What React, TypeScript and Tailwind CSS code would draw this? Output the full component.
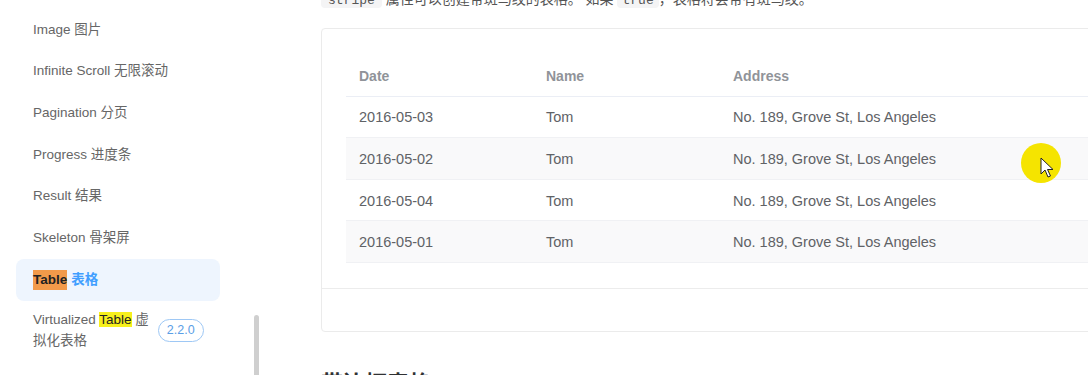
import React from 'react';

const FONT = "font-['Liberation_Sans','Noto_Sans_CJK_SC',sans-serif]";

const navItems = [
  'Image 图片',
  'Infinite Scroll 无限滚动',
  'Pagination 分页',
  'Progress 进度条',
  'Result 结果',
  'Skeleton 骨架屏',
];

const rows = [
  { date: '2016-05-03', name: 'Tom', address: 'No. 189, Grove St, Los Angeles' },
  { date: '2016-05-02', name: 'Tom', address: 'No. 189, Grove St, Los Angeles' },
  { date: '2016-05-04', name: 'Tom', address: 'No. 189, Grove St, Los Angeles' },
  { date: '2016-05-01', name: 'Tom', address: 'No. 189, Grove St, Los Angeles' },
];

const Sidebar = () => (
  <aside className="relative w-[262px] shrink-0 pt-[9px] pl-4">
    {navItems.map((label) => (
      <div key={label} className="h-[41.7px] flex items-center pl-[17px] text-[13.5px] text-[#666]">
        {label}
      </div>
    ))}

    {/* active item */}
    <div className="h-[42px] w-[204px] flex items-center pl-[17px] rounded-lg bg-[#eef5fe] text-[13.5px] font-bold">
      <span className="bg-[#f29a4a] text-[#222]">Table</span>
      <span className="ml-1 text-[#409eff]">表格</span>
    </div>

    <div className="flex items-center pl-[17px] pt-[8px] text-[13.5px] text-[#666] leading-[21px]">
      <span>
        Virtualized <span className="bg-[#f7f01c] text-[#222]">Table</span> 虚
        <br />
        拟化表格
      </span>
      <span className="ml-[9px] rounded-full border border-[#9ec8f5] px-[8px] text-[12.5px] leading-[21px] text-[#5a9ee6]">
        2.2.0
      </span>
    </div>

    {/* scrollbar thumb */}
    <div className="absolute left-[254px] top-[315px] h-[80px] w-[5px] rounded-t-full bg-[#cfcfcf]" />
  </aside>
);

const DemoTable = () => (
  <table className="w-full border-collapse text-left text-[14.5px]">
    <thead>
      <tr className="h-[42px] border-b border-[#ebeef5]">
        <th className="w-[187px] pl-[13px] pt-[4px] text-[14px] font-bold text-[#909399]">Date</th>
        <th className="w-[187px] pl-[13px] pt-[4px] text-[14px] font-bold text-[#909399]">Name</th>
        <th className="pl-[13px] pt-[4px] text-[14px] font-bold text-[#909399]">Address</th>
      </tr>
    </thead>
    <tbody>
      {rows.map((r, i) => (
        <tr
          key={r.date}
          className={`h-[41.6px] border-b border-[#f0f1f4] text-[#606266] ${i % 2 === 1 ? 'bg-[#f9f9fa]' : ''}`}
        >
          <td className="pl-[13px] pt-[3px]">{r.date}</td>
          <td className="pl-[13px] pt-[3px]">{r.name}</td>
          <td className="pl-[13px] pt-[3px]">{r.address}</td>
        </tr>
      ))}
    </tbody>
  </table>
);

export default function App() {
  return (
    <div className={`relative flex h-[375px] w-[1088px] overflow-hidden bg-white ${FONT}`}>
      <Sidebar />

      <main className="w-[826px] shrink-0 pl-[59px]">
        <p className="-mt-[12px] h-[22px] text-[14px] leading-[22px] text-[#555]">
          <code className="rounded bg-[#f4f4f5] px-[7px] font-['Liberation_Mono',monospace] text-[13px]">stripe</code>{' '}
          属性可以创建带斑马纹的表格。 如果{' '}
          <code className="rounded bg-[#f4f4f5] px-[5px] font-['Liberation_Mono',monospace] text-[13px]">true</code>
          ，表格将会带有斑马纹。
        </p>

        {/* demo card */}
        <div className="mt-[18px] w-[800px] rounded border border-[#ebebeb]">
          <div className="px-6 pt-[25px] pb-[25px]">
            <DemoTable />
          </div>
          <div className="h-[43px] border-t border-[#ececec]" />
        </div>

        <h3 className="mt-[37px] text-[22px] font-bold leading-[30px] text-[#303133]">带边框表格</h3>
      </main>

      {/* cursor highlight */}
      <div className="pointer-events-none absolute left-[1021px] top-[143px] h-[40px] w-[40px] rounded-full bg-[#f5e400]" />
      <svg className="pointer-events-none absolute left-[1040px] top-[157px]" width="14" height="22" viewBox="0 0 14 22">
        <path d="M1 1 L1 17 L5 13 L8 20 L10.5 19 L7.5 12.5 L13 12.5 Z" fill="#fff" stroke="#222" strokeWidth="1" strokeLinejoin="round" />
      </svg>
    </div>
  );
}
